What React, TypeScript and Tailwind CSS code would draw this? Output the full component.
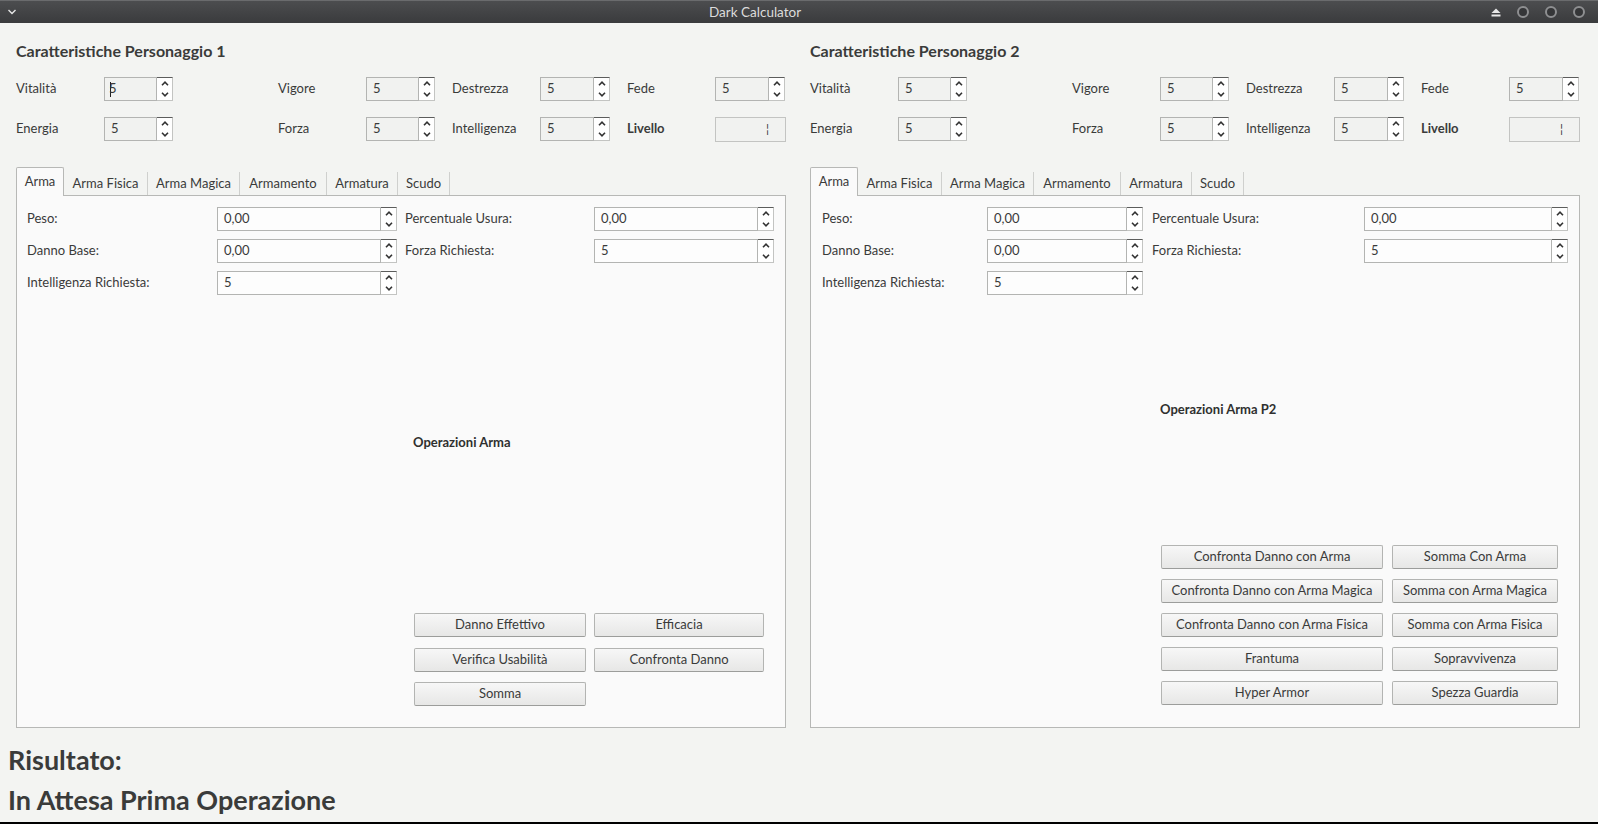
import React from "react";

const TEXT = "text-[#3a3b3a]";

function ChevUp() {
  return (
    <svg width="8" height="5" viewBox="0 0 8 5">
      <polyline points="1,4.2 4,1.2 7,4.2" fill="none" stroke="#333" strokeWidth="1.6" />
    </svg>
  );
}
function ChevDown() {
  return (
    <svg width="8" height="5" viewBox="0 0 8 5">
      <polyline points="1,0.8 4,3.8 7,0.8" fill="none" stroke="#333" strokeWidth="1.6" />
    </svg>
  );
}

function Spin({
  value,
  className,
  fieldClass,
  caret,
}: {
  value: string;
  className: string;
  fieldClass: string;
  caret?: boolean;
}) {
  return (
    <div className={`flex h-[24px] ${className}`}>
      <div
        className={`flex-1 flex items-center pl-[6px] text-[13px] border border-[#b3b4b2] ${fieldClass} ${TEXT}`}
      >
        {caret && <span className="w-px h-[15px] bg-[#222] -mr-[2px] ml-[-1px]" />}
        <span>{value}</span>
      </div>
      <div className="w-[16px] flex flex-col bg-white border-t border-t-[#5c5d5c] border-r border-b border-r-[#c3c4c2] border-b-[#c3c4c2]">
        <div className="flex-1 flex items-center justify-center">
          <ChevUp />
        </div>
        <div className="flex-1 flex items-center justify-center">
          <ChevDown />
        </div>
      </div>
    </div>
  );
}

function StatsHeader({ n }: { n: number }) {
  const L = `text-[13px] ${TEXT}`;
  const sp = "bg-[#f1f2f0]";
  return (
    <div className="flex flex-col">
      <div className={`text-[16px] font-bold leading-[20px] ${TEXT}`}>
        Caratteristiche Personaggio {n}
      </div>
      <div className="mt-[16px] grid grid-cols-[88px_174px_88px_86px_88px_87px_88px_71px] grid-rows-[24px_24px] gap-y-[16px] items-center">
        <span className={L}>Vitalità</span>
        <Spin value="5" className="w-[69px]" fieldClass={sp} caret={n === 1} />
        <span className={L}>Vigore</span>
        <Spin value="5" className="w-[69px]" fieldClass={sp} />
        <span className={L}>Destrezza</span>
        <Spin value="5" className="w-[70px]" fieldClass={sp} />
        <span className={L}>Fede</span>
        <Spin value="5" className="w-[70px]" fieldClass={sp} />

        <span className={L}>Energia</span>
        <Spin value="5" className="w-[69px]" fieldClass={sp} />
        <span className={L}>Forza</span>
        <Spin value="5" className="w-[69px]" fieldClass={sp} />
        <span className={L}>Intelligenza</span>
        <Spin value="5" className="w-[70px]" fieldClass={sp} />
        <span className={`${L} font-bold`}>Livello</span>
        <div className="w-[71px] h-[25px] border border-[#c3c4c2] bg-[#f1f2f0] flex items-center justify-end pr-[16px]">
          <span className="text-[12px] leading-none text-[#333]">¦</span>
        </div>
      </div>
    </div>
  );
}

function Tabs() {
  const tabs: [string, string][] = [
    ["Arma Fisica", "w-[84px]"],
    ["Arma Magica", "w-[92px]"],
    ["Armamento", "w-[87px]"],
    ["Armatura", "w-[71px]"],
    ["Scudo", "w-[52px]"],
  ];
  return (
    <div className="flex items-end h-[28px] relative z-10">
      <div
        className={`w-[48px] h-[29px] -mb-px border border-b-0 border-[#b7b8b6] bg-[#fafafa] rounded-t-[2px] flex items-center justify-center text-[13px] ${TEXT}`}
      >
        Arma
      </div>
      {tabs.map(([t, w]) => (
        <div
          key={t}
          className={`${w} h-[23px] border-r border-[#cfd0ce] flex items-center justify-center text-[13px] ${TEXT}`}
        >
          {t}
        </div>
      ))}
    </div>
  );
}

function Btn({ label }: { label: string }) {
  return (
    <div
      className={`h-[24px] flex items-center justify-center text-[13px] rounded-[2px] border border-[#b3b4b2] border-b-[#9c9d9b] bg-gradient-to-b from-[#f7f7f7] to-[#e7e7e6] ${TEXT}`}
    >
      {label}
    </div>
  );
}

function FormRow({
  label,
  labelW,
  value,
  fieldW,
}: {
  label: string;
  labelW: string;
  value: string;
  fieldW: string;
}) {
  return (
    <>
      <span className={`${labelW} text-[13px] ${TEXT}`}>{label}</span>
      <Spin value={value} className={fieldW} fieldClass="bg-[#fdfdfd]" />
    </>
  );
}

function LeftPane() {
  return (
    <div className="flex flex-col">
      <Tabs />
      <div className="h-[533px] border border-[#b7b8b6] bg-[#fafafa] flex flex-col pl-[10px] pt-[11px]">
        <div className="flex items-center h-[24px]">
          <FormRow label="Peso:" labelW="w-[190px]" value="0,00" fieldW="w-[180px]" />
          <div className="w-[8px]" />
          <FormRow label="Percentuale Usura:" labelW="w-[189px]" value="0,00" fieldW="w-[180px]" />
        </div>
        <div className="flex items-center h-[24px] mt-[8px]">
          <FormRow label="Danno Base:" labelW="w-[190px]" value="0,00" fieldW="w-[180px]" />
          <div className="w-[8px]" />
          <FormRow label="Forza Richiesta:" labelW="w-[189px]" value="5" fieldW="w-[180px]" />
        </div>
        <div className="flex items-center h-[24px] mt-[8px]">
          <FormRow label="Intelligenza Richiesta:" labelW="w-[190px]" value="5" fieldW="w-[180px]" />
        </div>
        <div className="ml-[386px] mt-[139px] text-[13px] font-bold leading-[16px] text-[#2f302f]">
          Operazioni Arma
        </div>
        <div className="ml-[387px] mt-[163px] grid grid-cols-[172px_170px] gap-x-[8px] gap-y-[10.5px]">
          <Btn label="Danno Effettivo" />
          <Btn label="Efficacia" />
          <Btn label="Verifica Usabilità" />
          <Btn label="Confronta Danno" />
          <Btn label="Somma" />
        </div>
      </div>
    </div>
  );
}

function RightPane() {
  const btns = [
    "Confronta Danno con Arma",
    "Somma Con Arma",
    "Confronta Danno con Arma Magica",
    "Somma con Arma Magica",
    "Confronta Danno con Arma Fisica",
    "Somma con Arma Fisica",
    "Frantuma",
    "Sopravvivenza",
    "Hyper Armor",
    "Spezza Guardia",
  ];
  return (
    <div className="flex flex-col">
      <Tabs />
      <div className="h-[533px] border border-[#b7b8b6] bg-[#fafafa] flex flex-col pl-[11px] pt-[11px]">
        <div className="flex items-center h-[24px]">
          <FormRow label="Peso:" labelW="w-[165px]" value="0,00" fieldW="w-[156px]" />
          <div className="w-[9px]" />
          <FormRow label="Percentuale Usura:" labelW="w-[212px]" value="0,00" fieldW="w-[204px]" />
        </div>
        <div className="flex items-center h-[24px] mt-[8px]">
          <FormRow label="Danno Base:" labelW="w-[165px]" value="0,00" fieldW="w-[156px]" />
          <div className="w-[9px]" />
          <FormRow label="Forza Richiesta:" labelW="w-[212px]" value="5" fieldW="w-[204px]" />
        </div>
        <div className="flex items-center h-[24px] mt-[8px]">
          <FormRow label="Intelligenza Richiesta:" labelW="w-[165px]" value="5" fieldW="w-[156px]" />
        </div>
        <div className="ml-[338px] mt-[106px] text-[13px] font-bold leading-[16px] text-[#2f302f]">
          Operazioni Arma P2
        </div>
        <div className="ml-[339px] mt-[128px] grid grid-cols-[222px_166px] gap-x-[9px] gap-y-[10px]">
          {btns.map((b) => (
            <Btn key={b} label={b} />
          ))}
        </div>
      </div>
    </div>
  );
}

export default function App() {
  return (
    <div className="w-[1598px] h-[824px] overflow-hidden bg-[#f3f4f2] flex flex-col font-['Lato',sans-serif] border-b-2 border-black">
      {/* title bar */}
      <div className="h-[23px] shrink-0 bg-gradient-to-b from-[#4c4d4f] to-[#3a3b3d] border-t border-[#6a6b6d] flex items-center relative">
        <div className="w-[24px] flex items-center justify-center">
          <svg width="10" height="6" viewBox="0 0 10 6">
            <polyline points="1.5,1 5,4.5 8.5,1" fill="none" stroke="#e6e6e6" strokeWidth="1.4" />
          </svg>
        </div>
        <div className="absolute left-[709px] top-0 h-full flex items-center text-[13.5px] text-[#dcdcdc]">
          Dark Calculator
        </div>
        <div className="ml-auto flex items-center gap-[16px] pr-[13px]">
          <svg width="10" height="9" viewBox="0 0 10 9">
            <polygon points="5,0.5 9.5,5 0.5,5" fill="#e8e8e8" />
            <rect x="0.5" y="6.5" width="9" height="2" fill="#e8e8e8" />
          </svg>
          {[0, 1, 2].map((i) => (
            <div
              key={i}
              className="w-[12px] h-[12px] rounded-full bg-[#353638] border-2 border-[#8e8f91]"
            />
          ))}
        </div>
      </div>

      <div className="flex gap-[24px] pl-[16px] pt-[18px]">
        <div className="w-[770px] flex flex-col">
          <StatsHeader n={1} />
          <div className="mt-[26px]">
            <LeftPane />
          </div>
        </div>
        <div className="w-[770px] flex flex-col">
          <StatsHeader n={2} />
          <div className="mt-[26px]">
            <RightPane />
          </div>
        </div>
      </div>

      <div className={`pl-[8px] mt-[12px] text-[27px] font-bold leading-[40px] ${TEXT}`}>
        <div>Risultato:</div>
        <div>In Attesa Prima Operazione</div>
      </div>
    </div>
  );
}
